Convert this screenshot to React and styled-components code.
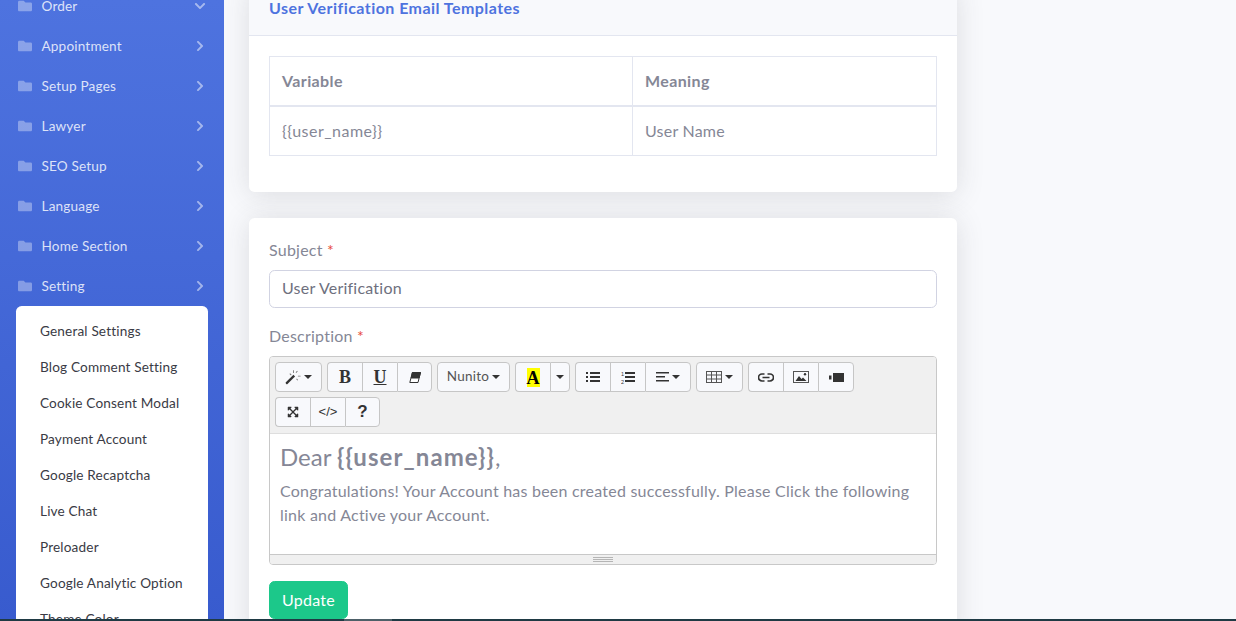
import React from 'react';
import styled, { createGlobalStyle } from 'styled-components';
import { FaFolder, FaChevronRight, FaChevronDown, FaExpandArrowsAlt } from 'react-icons/fa';

const menu = ['Appointment', 'Setup Pages', 'Lawyer', 'SEO Setup', 'Language', 'Home Section', 'Setting'];
const subMenu = [
  'General Settings',
  'Blog Comment Setting',
  'Cookie Consent Modal',
  'Payment Account',
  'Google Recaptcha',
  'Live Chat',
  'Preloader',
  'Google Analytic Option',
  'Theme Color',
];

// summernote's toolbar glyphs, redrawn
const MagicIcon = () => (
  <svg width="16" height="16" viewBox="0 0 18 17" fill="#333">
    <path d="M1 14.5 9.500 6l1.800 1.800L2.800 16.300a1 1 0 0 1-1.400 0l-.4-.4a1 1 0 0 1 0-1.400z" />
    <path d="M9 1h1v3H9zM14.500 7h3v1h-3zM5 5l.8-.7L7.400 6l-.7.7zM12 3.200l1.600-1.600.7.7-1.600 1.600zM12.600 11l.7-.7 1.500 1.500-.7.7z" fill="#777" />
  </svg>
);

const EraserIcon = () => (
  <svg width="12" height="11" viewBox="0 0 12 11">
    <path d="M3.400 0.500H11.500L9 10.500H0.800z" fill="#fff" stroke="#333" />
    <path d="M3.400 0.500H11.500L10 6H2.200z" fill="#333" stroke="#333" />
  </svg>
);

const ListIcon = () => (
  <svg width="14" height="12" viewBox="0 0 14 12" fill="#333">
    <path d="M0 1h2v2H0zM0 5h2v2H0zM0 9h2v2H0zM4 1h10v2H4zM4 5h10v2H4zM4 9h10v2H4z" />
  </svg>
);

const OrderedIcon = () => (
  <svg width="14" height="13" viewBox="0 0 14 13" fill="#333">
    <path d="M4 1h10v2H4zM4 5h10v2H4zM4 9h10v2H4z" />
    <text x="0" y="5" fontSize="5.500" fontFamily="Liberation Sans">1</text>
    <text x="0" y="12.500" fontSize="5.500" fontFamily="Liberation Sans">2</text>
  </svg>
);

const AlignIcon = () => (
  <svg width="13" height="10" viewBox="0 0 13 10" fill="#333">
    <path d="M0 0h13v1.500H0zM0 4h9v1.500H0zM0 8h13v1.500H0z" />
  </svg>
);

const TableIcon = () => (
  <svg width="16" height="12" viewBox="0 0 16 12" fill="none" stroke="#555" strokeWidth="1">
    <rect x="0.5" y="0.5" width="15" height="11" />
    <path d="M0.5 4h15M0.5 8h15M5.5 0.5v11M10.500 0.5v11" />
  </svg>
);

const LinkIcon = () => (
  <svg width="16" height="9" viewBox="0 0 16 9" fill="none" stroke="#333" strokeWidth="1.700">
    <path d="M6.500 1H4a3.500 3.500 0 0 0 0 7h2.500M9.500 1H12a3.500 3.500 0 0 1 0 7H9.500M4.500 4.500h7" />
  </svg>
);

const PictureIcon = () => (
  <svg width="16" height="12" viewBox="0 0 16 12">
    <rect x="0.5" y="0.5" width="15" height="11" fill="none" stroke="#555" />
    <path d="M2.500 10 6 5l2.500 3L10 6.500 13.500 10z" fill="#333" />
    <circle cx="12" cy="3.300" r="1.200" fill="#333" />
  </svg>
);

const VideoIcon = () => (
  <svg width="15" height="9" viewBox="0 0 15 9" fill="#333">
    <path d="M0 2.500h2.500v4H0zM4 0h11v9H4z" />
  </svg>
);

const App = () => {
  return (
    <Page>
      <GlobalStyle />
      <Sidebar>
        <NavRow>
          <FaFolder size={14} />
          <NavLabel>Order</NavLabel>
          <NavArrow><FaChevronDown size={12} /></NavArrow>
        </NavRow>
        {menu.map((item) => (
          <NavRow key={item}>
            <FaFolder size={14} />
            <NavLabel>{item}</NavLabel>
            <NavArrow><FaChevronRight size={12} /></NavArrow>
          </NavRow>
        ))}
        <SubMenu>
          {subMenu.map((item) => (
            <SubItem key={item}>{item}</SubItem>
          ))}
        </SubMenu>
      </Sidebar>

      <Main>
        <Card>
          <CardHeader>User Verification Email Templates</CardHeader>
          <CardBody>
            <VarTable>
              <thead>
                <tr>
                  <Th $width={363}>Variable</Th>
                  <Th>Meaning</Th>
                </tr>
              </thead>
              <tbody>
                <tr>
                  <Td $wide>{'{{user_name}}'}</Td>
                  <Td>User Name</Td>
                </tr>
              </tbody>
            </VarTable>
          </CardBody>
        </Card>

        <Card>
          <CardBody>
            <FormGroup>
              <Label>
                Subject <Required>*</Required>
              </Label>
              <Input defaultValue="User Verification" />
            </FormGroup>
            <FormGroup>
              <Label>
                Description <Required>*</Required>
              </Label>
              <Editor>
                <Toolbar>
                  <BtnGroup>
                    <ToolBtn $width={47}>
                      <MagicIcon />
                      <Caret />
                    </ToolBtn>
                  </BtnGroup>
                  <BtnGroup>
                    <ToolBtn><SerifGlyph>B</SerifGlyph></ToolBtn>
                    <ToolBtn><SerifGlyph $underline>U</SerifGlyph></ToolBtn>
                    <ToolBtn><EraserIcon /></ToolBtn>
                  </BtnGroup>
                  <BtnGroup>
                    <ToolBtn $width={73}>
                      <FontName>Nunito</FontName>
                      <Caret />
                    </ToolBtn>
                  </BtnGroup>
                  <BtnGroup>
                    <ToolBtn><ColorGlyph>A</ColorGlyph></ToolBtn>
                    <ToolBtn $width={20}><Caret /></ToolBtn>
                  </BtnGroup>
                  <BtnGroup>
                    <ToolBtn><ListIcon /></ToolBtn>
                    <ToolBtn><OrderedIcon /></ToolBtn>
                    <ToolBtn $width={46}>
                      <AlignIcon />
                      <Caret />
                    </ToolBtn>
                  </BtnGroup>
                  <BtnGroup>
                    <ToolBtn $width={47}>
                      <TableIcon />
                      <Caret />
                    </ToolBtn>
                  </BtnGroup>
                  <BtnGroup>
                    <ToolBtn><LinkIcon /></ToolBtn>
                    <ToolBtn><PictureIcon /></ToolBtn>
                    <ToolBtn $width={36}><VideoIcon /></ToolBtn>
                  </BtnGroup>
                  <BtnGroup>
                    <ToolBtn><FaExpandArrowsAlt size={12} /></ToolBtn>
                    <ToolBtn><CodeGlyph>{'</>'}</CodeGlyph></ToolBtn>
                    <ToolBtn><HelpGlyph>?</HelpGlyph></ToolBtn>
                  </BtnGroup>
                </Toolbar>
                <EditArea>
                  <Greeting>
                    Dear <strong>{'{{user_name}}'}</strong>,
                  </Greeting>
                  <Message>
                    Congratulations! Your Account has been created successfully. Please Click the following link and
                    Active your Account.
                  </Message>
                </EditArea>
                <StatusBar>
                  <Grip />
                </StatusBar>
              </Editor>
            </FormGroup>
            <SubmitButton type="button">Update</SubmitButton>
          </CardBody>
        </Card>
      </Main>
      <TaskStrip>
        <TaskTab />
      </TaskStrip>
    </Page>
  );
};

export default App;

const GlobalStyle = createGlobalStyle`
  html, body {
    margin: 0;
    height: 100%;
    overflow: hidden;
  }

  body {
    background: #f8f9fc;
    font-family: "Lato", "Noto Sans", sans-serif;
    font-size: 16px;
    line-height: 24px;
    letter-spacing: 0.014em;
    color: #858796;
  }

  * {
    box-sizing: border-box;
  }
`;

const Page = styled.div`
  display: flex;
  height: 100vh;
  overflow: hidden;
`;

const Sidebar = styled.nav`
  flex: 0 0 224px;
  background: linear-gradient(180deg, #4e73df 0%, #385bce 100%);
  overflow: hidden;
`;

const NavRow = styled.div`
  display: flex;
  align-items: center;
  height: 40px;
  padding: 0 18px 0 18px;
  color: rgba(255, 255, 255, 0.35);

  &:first-child {
    margin-top: -14px;
  }
`;

const NavLabel = styled.span`
  flex: 1;
  margin-left: 9.5px;
  font-size: 13.6px;
  letter-spacing: 0.012em;
  color: rgba(255, 255, 255, 0.82);
`;

const NavArrow = styled.span`
  display: flex;
  color: rgba(255, 255, 255, 0.5);
`;

const SubMenu = styled.div`
  margin: 0 16px;
  padding: 8px 0;
  background: #fff;
  border-radius: 5.6px;
`;

const SubItem = styled.div`
  height: 36px;
  padding: 0 0 0 24px;
  font-size: 13.6px;
  line-height: 34px;
  letter-spacing: 0.012em;
  white-space: nowrap;
  color: #3a3b45;
`;

const Main = styled.main`
  flex: 1;
  padding-left: 25px;
  margin-top: -14px;
`;

const Card = styled.section`
  width: 708px;
  margin-bottom: 26px;
  background: #fff;
  border-radius: 5.6px;
  box-shadow: 0 2.4px 28px rgba(58, 59, 69, 0.15);
`;

const CardHeader = styled.h6`
  margin: 0;
  padding: 12px 20px 17px;
  font-size: 16px;
  line-height: 20px;
  font-weight: 700;
  letter-spacing: 0.028em;
  color: #4e73df;
  background: #f8f9fc;
  border-bottom: 1px solid #e3e6f0;
  border-radius: 5.6px 5.6px 0 0;
`;

const CardBody = styled.div`
  padding: 20px;
`;

const VarTable = styled.table`
  width: 100%;
  margin-bottom: 16px;
  border-collapse: collapse;
  table-layout: fixed;
`;

const Th = styled.th`
  width: ${({ $width }) => ($width ? `${$width}px` : 'auto')};
  padding: 12px;
  text-align: left;
  font-weight: 700;
  letter-spacing: 0.024em;
  border: 1px solid #e3e6f0;
  border-bottom-width: 2px;
`;

const Td = styled.td`
  padding: 12px;
  letter-spacing: ${({ $wide }) => ($wide ? '0.03em' : '0.014em')};
  border: 1px solid #e3e6f0;
`;

const FormGroup = styled.div`
  margin-bottom: 16px;
`;

const Label = styled.label`
  display: block;
  margin-bottom: 8px;
`;

const Required = styled.span`
  color: #e74a3b;
`;

const Input = styled.input`
  display: block;
  width: 100%;
  height: 38px;
  padding: 4px 12px 8px;
  font: inherit;
  letter-spacing: inherit;
  color: #6e707e;
  background: #fff;
  border: 1px solid #d1d3e2;
  border-radius: 5.6px;
`;

const Editor = styled.div`
  border: 1px solid #c8c8c8;
  border-radius: 4px;
  overflow: hidden;
`;

const Toolbar = styled.div`
  display: flex;
  flex-wrap: wrap;
  align-content: flex-start;
  gap: 5px;
  height: 77px;
  padding: 5px;
  background: #f0f0f0;
  border-bottom: 1px solid #dedede;
`;

const BtnGroup = styled.div`
  display: flex;
  height: 30px;
`;

const ToolBtn = styled.div`
  display: flex;
  align-items: center;
  justify-content: center;
  gap: 3px;
  width: ${({ $width }) => $width || 35}px;
  color: #333;
  background: #f8f9fc;
  border: 1px solid #c6c6c6;
  border-right-width: 0;

  &:first-child {
    border-radius: 4px 0 0 4px;
  }

  &:last-child {
    border-right-width: 1px;
    border-radius: 0 4px 4px 0;
  }

  &:only-child {
    border-radius: 4px;
  }
`;

const Caret = styled.span`
  width: 0;
  height: 0;
  border-top: 4px solid #333;
  border-left: 4px solid transparent;
  border-right: 4px solid transparent;
`;

const SerifGlyph = styled.span`
  font-family: "Liberation Serif", serif;
  font-size: 18px;
  font-weight: 700;
  line-height: 1;
  letter-spacing: 0;
  color: #333;
  text-decoration: ${({ $underline }) => ($underline ? 'underline' : 'none')};
`;

const ColorGlyph = styled(SerifGlyph)`
  display: block;
  width: 13px;
  height: 19px;
  line-height: 21px;
  text-align: center;
  color: #000;
  background: #ff0;
`;

const FontName = styled.span`
  font-size: 13.5px;
  line-height: 1;
  color: #555;
`;

const CodeGlyph = styled.span`
  font-family: "Liberation Sans", sans-serif;
  font-size: 13px;
  letter-spacing: 0;
  color: #333;
`;

const HelpGlyph = styled.span`
  font-family: "Liberation Sans", sans-serif;
  font-size: 17px;
  font-weight: 700;
  letter-spacing: 0;
  color: #333;
`;

const EditArea = styled.div`
  height: 121px;
  padding: 9px 10px;
  background: #fff;
  border-bottom: 1px solid #c8c8c8;
`;

const Greeting = styled.p`
  margin: 0 0 8px;
  font-size: 24px;
  line-height: 28px;
  letter-spacing: 0;

  strong {
    font-weight: 700;
    letter-spacing: 0.045em;
  }
`;

const Message = styled.p`
  margin: 0;
`;

const StatusBar = styled.div`
  display: flex;
  align-items: center;
  justify-content: center;
  height: 9px;
  background: #f0f0f0;
`;

const Grip = styled.div`
  width: 20px;
  height: 5px;
  border-top: 1px solid #b5b5b5;
  border-bottom: 1px solid #b5b5b5;
  background: linear-gradient(#b5b5b5, #b5b5b5) center / 100% 1px no-repeat;
`;

const SubmitButton = styled.button`
  display: block;
  height: 38px;
  width: 79px;
  padding: 0 0 1px;
  font: inherit;
  letter-spacing: inherit;
  color: #fff;
  background: #1cc88a;
  border: 1px solid #1cc88a;
  border-radius: 5.6px;
`;

const TaskStrip = styled.div`
  position: fixed;
  left: 0;
  right: 0;
  bottom: 0;
  height: 2px;
  background: #1f3a44;
`;

const TaskTab = styled.div`
  width: 48px;
  height: 2px;
  margin-left: 344px;
  background: #4d6068;
`;
